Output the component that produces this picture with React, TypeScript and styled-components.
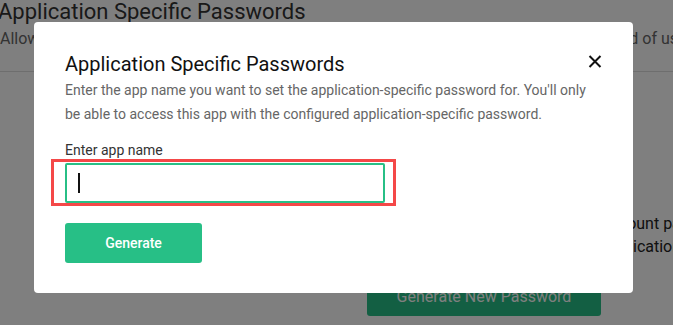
import React from "react";
import styled, { createGlobalStyle } from "styled-components";

const Global = createGlobalStyle`
  html, body { margin: 0; padding: 0; background: #fff; }
  body { font-family: Roboto, "Noto Sans", Arial, sans-serif; overflow: hidden; }
  * { box-sizing: border-box; }
`;

const Page = styled.div`
  width: 673px;
  height: 325px;
  overflow: hidden;
  position: relative;
  color: #333;
`;

const PageTitle = styled.h1`
  margin: 0 0 0 -2px;
  font-size: 22px;
  font-weight: 400;
  line-height: 24px;
  color: #333;
`;

const PageIntro = styled.p`
  margin: 4px 0 0 0;
  font-size: 16px;
  line-height: 22px;
  color: #666;
  white-space: nowrap;
`;

const Divider = styled.hr`
  margin: 21px 0 0 0;
  border: none;
  border-top: 1px solid #ddd;
`;

const Columns = styled.div`
  display: grid;
  grid-template-columns: 367px 1fr;
  padding-top: 140px;
`;

const RightCol = styled.div`
  display: flex;
  flex-direction: column;
`;

const SideText = styled.p`
  margin: 0;
  font-size: 16px;
  line-height: 23px;
  color: #222;
  white-space: nowrap;
`;

const DarkButton = styled.button`
  margin-top: 18px;
  width: 234px;
  height: 40px;
  border: none;
  border-radius: 3px;
  background: #27bf86;
  color: #fff;
  font-family: Roboto, sans-serif;
  font-size: 16px;
`;

const Overlay = styled.div`
  position: fixed;
  inset: 0;
  background: rgba(0, 0, 0, 0.5);
  padding: 22px 0 0 34px;
`;

const Modal = styled.div`
  width: 599px;
  height: 271px;
  background: #fff;
  border-radius: 4px;
  padding: 28px 31px 0 31px;
  display: flex;
  flex-direction: column;
`;

const Header = styled.div`
  display: flex;
  justify-content: space-between;
  align-items: flex-start;
`;

const Title = styled.h2`
  margin: 0;
  font-size: 20px;
  font-weight: 400;
  line-height: 28px;
  color: #111;
`;

const CloseButton = styled.button`
  border: none;
  background: none;
  padding: 0;
  margin: 5px 0 0 0;
  width: 14px;
  height: 13px;
  display: flex;
  cursor: pointer;
`;

const Description = styled.p`
  margin: 0;
  font-size: 14px;
  line-height: 24px;
  color: #666;
`;

const Label = styled.label`
  display: block;
  margin-top: 14px;
  font-size: 14px;
  line-height: 20px;
  color: #333;
`;

const Highlight = styled.div`
  margin: -1px 0 0 -14px;
  width: 345px;
  height: 47px;
  border: 3px solid #f44848;
  padding: 0 0 0 11px;
  display: flex;
  align-items: center;
`;

const InputBox = styled.div`
  width: 320px;
  height: 40px;
  border: 2px solid #27bf86;
  border-radius: 2px;
  display: flex;
  align-items: center;
  padding-left: 11px;
`;

const Caret = styled.span`
  width: 1.5px;
  height: 20px;
  background: #111;
`;

const GenerateButton = styled.button`
  margin-top: 17px;
  width: 137px;
  height: 40px;
  border: none;
  border-radius: 3px;
  background: #27bf86;
  color: #fff;
  font-family: Roboto, sans-serif;
  font-size: 14px;
  font-weight: 500;
`;

export default function App() {
  return (
    <>
      <Global />
      <Page>
        <PageTitle>Application Specific Passwords</PageTitle>
        <PageIntro>
          Allow third-party applications to access your account, with a unique app password instead of using your main password.
        </PageIntro>
        <Divider />
        <Columns>
          <div />
          <RightCol>
            <SideText>Create a passcode to use for the account password</SideText>
            <SideText>on each single unique third-party application you use.</SideText>
            <DarkButton>Generate New Password</DarkButton>
          </RightCol>
        </Columns>
        <Overlay>
          <Modal>
            <Header>
              <Title>Application Specific Passwords</Title>
              <CloseButton aria-label="Close">
                <svg width="14" height="13" viewBox="0 0 14 13">
                  <path d="M1.5 1 L12.5 12 M12.5 1 L1.5 12" stroke="#111" strokeWidth="2" />
                </svg>
              </CloseButton>
            </Header>
            <Description>
              Enter the app name you want to set the application-specific password for. You'll only be able to access this app with the configured application-specific password.
            </Description>
            <Label>Enter app name</Label>
            <Highlight>
              <InputBox>
                <Caret />
              </InputBox>
            </Highlight>
            <GenerateButton>Generate</GenerateButton>
          </Modal>
        </Overlay>
      </Page>
    </>
  );
}
